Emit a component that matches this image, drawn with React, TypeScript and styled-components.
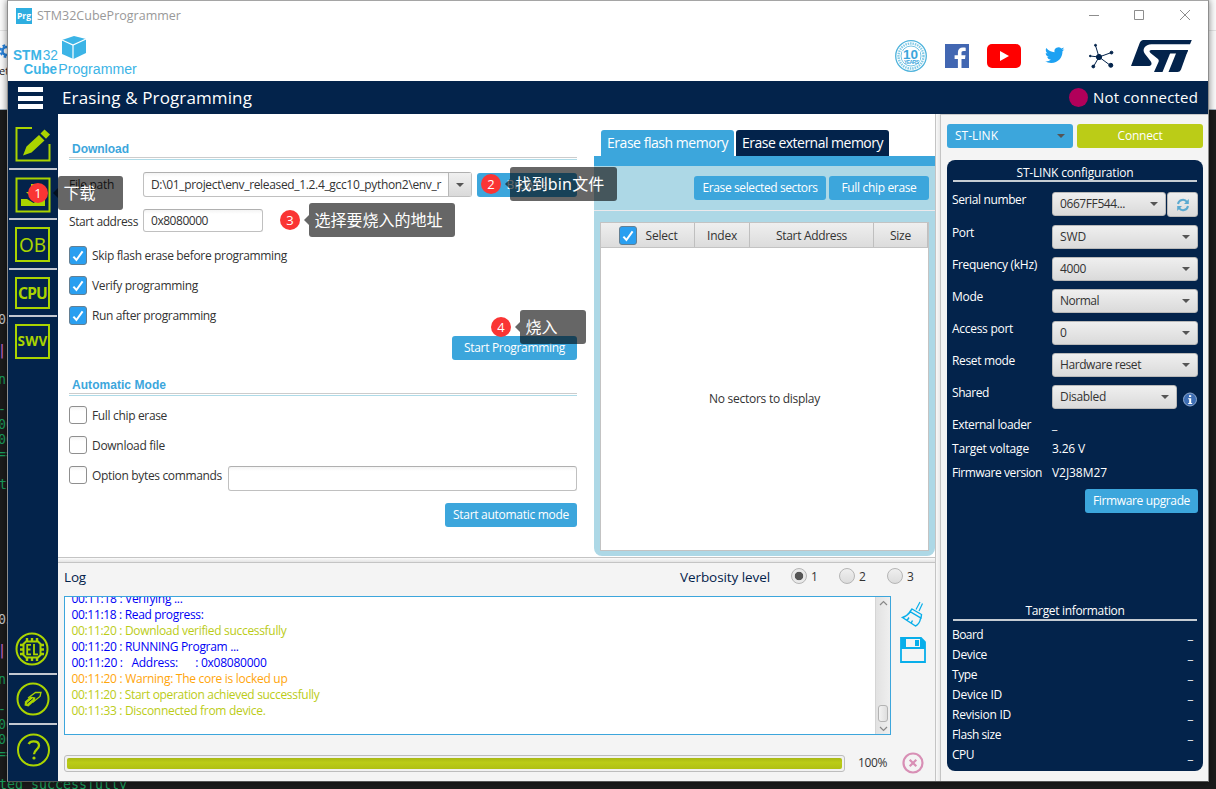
import React, { useLayoutEffect, useRef, useState } from "react";
import styled, { createGlobalStyle } from "styled-components";

const NAVY = "#03234b";
const BLUE = "#3ca6dc";
const LIME = "#aad400";
const UI = `"Open Sans", "Noto Sans", "Noto Sans CJK SC", sans-serif`;

const Global = createGlobalStyle`
  * { box-sizing: border-box; }
  body { margin: 0; overflow: hidden; font: 12px/16px ${UI}; color: #333; }
`;

const FitSpan = styled.span<{ $drop: number }>`
  display: inline-block;
  flex: none;
  padding-top: ${(p) => p.$drop}px;
  white-space: pre;
`;
function Fit({ w, drop = 0, children }: { w: number; drop?: number; children: string }) {
  const ref = useRef<HTMLSpanElement>(null);
  const [ls, setLs] = useState(0);
  useLayoutEffect(() => {
    const natural = ref.current!.getBoundingClientRect().width;
    setLs((w - natural) / children.length);
  }, [w, children]);
  return <FitSpan ref={ref} $drop={drop} style={{ letterSpacing: ls }}>{children}</FitSpan>;
}

/* ---------- desktop behind the window ---------- */
const Desktop = styled.div`
  position: relative;
  width: 1216px;
  height: 789px;
  overflow: hidden;
  background: linear-gradient(#fbfbfb 0 30px, #e4e4e4 30px 31px, #fafafa 31px 109px, #9fb0bd 109px 110px, #1b1b1b 110px);
`;
const Behind = styled.div<{ $x: number; $y: number; $c: string; $sans?: boolean }>`
  position: absolute;
  left: ${(p) => p.$x}px;
  top: ${(p) => p.$y}px;
  color: ${(p) => p.$c};
  font: ${(p) => (p.$sans ? `11px/14px ${UI}` : `13.3px/16px "DejaVu Sans Mono", monospace`)};
  white-space: pre;
`;
const BehindGear = styled.svg`
  position: absolute;
  left: 0;
  top: 43px;
`;
const Window = styled.div`
  position: relative;
  display: flex;
  flex-direction: column;
  width: 1202px;
  height: 782px;
  margin-left: 7px;
  border: 1px solid #8d8d8d;
  border-top-color: #a5a5a5;
  border-bottom-color: #555;
  background: #fff;
  box-shadow: 0 0 7px rgba(0, 0, 0, 0.5);
`;

/* ---------- header ---------- */
const TitleBar = styled.div`
  display: flex;
  align-items: center;
  height: 29px;
  padding: 0 16px 0 8px;
  font-size: 12.5px;
  color: #999;
`;
const AppBadge = styled.span`
  width: 16px;
  height: 16px;
  margin-right: 5px;
  background: #2eaee0;
  color: #fff;
  font: bold 8.5px/15px ${UI};
  text-align: center;
`;
const WinButtons = styled.svg`
  margin: -1px 0 0 auto;
`;
const BrandRow = styled.div`
  display: flex;
  height: 51px;
`;
const Socials = styled.svg`
  margin-left: auto;
`;
const PageBar = styled.div`
  display: flex;
  align-items: center;
  height: 33px;
  padding: 0 10px;
  background: ${NAVY};
  color: #fff;
  font-size: 17px;
`;
const Burger = styled.div`
  display: flex;
  flex-direction: column;
  justify-content: space-between;
  width: 25px;
  height: 22px;
  margin: 1px 19px 0 0;
  i { height: 5px; background: #fff; }
`;
const Status = styled.div`
  display: flex;
  align-items: center;
  gap: 5px;
  margin-left: auto;
  font-size: 15px;
  i { width: 19px; height: 19px; border-radius: 50%; background: #b1005a; }
  span { margin-top: -2px; }
`;

/* ---------- sidebar ---------- */
const Body = styled.div`
  display: flex;
  flex: 1;
  min-height: 0;
`;
const Sidebar = styled.div`
  display: flex;
  flex-direction: column;
  width: 50px;
  padding: 0 1px;
  background: ${NAVY};
`;
const SideItem = styled.div<{ $h: number; $last?: boolean; $pad?: string }>`
  display: flex;
  align-items: center;
  justify-content: center;
  height: ${(p) => p.$h}px;
  padding: ${(p) => p.$pad || "0 1px 0 0"};
  border-bottom: ${(p) => (p.$last ? "0" : "2px solid #c3c8d0")};
`;
const SideBox = styled.div<{ $h: number; $size: number; $bold?: boolean }>`
  display: flex;
  align-items: center;
  justify-content: center;
  width: 35px;
  height: ${(p) => p.$h}px;
  border: 2px solid ${LIME};
  color: ${LIME};
  font-family: "Noto Sans", sans-serif;
  font-size: ${(p) => p.$size}px;
  font-weight: ${(p) => (p.$bold ? 700 : 400)};
`;
const Spacer = styled.div`
  flex: 1;
`;

/* ---------- centre ---------- */
const Centre = styled.div`
  display: flex;
  flex-direction: column;
  width: 877px;
`;
const Work = styled.div`
  display: flex;
  height: 443px;
`;
const Form = styled.div`
  width: 519px;
  margin-right: 17px;
  padding: 27px 0 0 11px;
`;
const SectionTitle = styled.div`
  height: 19px;
  padding: 0 3px;
  border-bottom: 1px solid #aedbe8;
  background: linear-gradient(#ccc, #ccc) 0 16px / 100% 1px no-repeat;
  color: ${BLUE};
  font: bold 12px/15px "Liberation Sans", Arial, sans-serif;
`;
const Line = styled.div<{ $h: number; $mt?: number; $end?: boolean }>`
  display: flex;
  align-items: center;
  justify-content: ${(p) => (p.$end ? "flex-end" : "flex-start")};
  height: ${(p) => p.$h}px;
  margin-top: ${(p) => p.$mt || 0}px;
`;
const Label = styled.div<{ $w?: number; $drop?: number }>`
  width: ${(p) => (p.$w ? p.$w + "px" : "auto")};
  padding-top: ${(p) => p.$drop || 0}px;
  flex: none;
`;
const Field = styled.div<{ $w: number; $h: number }>`
  display: flex;
  align-items: center;
  width: ${(p) => p.$w}px;
  height: ${(p) => p.$h}px;
  padding-left: 7px;
  border: 1px solid #c0c0c0;
  border-top-color: #b0b0b0;
  border-radius: 3px;
  background: linear-gradient(#f4f4f4, #fff 4px);
`;
const FieldArrow = styled.div`
  display: flex;
  align-items: center;
  justify-content: center;
  width: 23px;
  height: 100%;
  margin-left: auto;
  border-left: 1px solid #b8b8b8;
  background: linear-gradient(#f0f0f0, #dadada);
`;
const Caret = styled.i`
  border: 4px solid transparent;
  border-top-color: #555;
  border-bottom: 0;
`;
const Button = styled.div<{ $w: number; $green?: boolean }>`
  display: flex;
  align-items: center;
  justify-content: center;
  flex: none;
  width: ${(p) => p.$w}px;
  height: 24px;
  border-radius: 3px;
  background: ${(p) => (p.$green ? "#bbcc17" : BLUE)};
  color: #fff;
`;
const Box = styled.span<{ $on?: boolean }>`
  display: flex;
  align-items: center;
  justify-content: center;
  flex: none;
  width: 18px;
  height: ${(p) => (p.$on ? 19 : 18)}px;
  border-radius: 3px;
  border: 1px solid ${(p) => (p.$on ? "#637f93" : "#8f8f8f")};
  background: ${(p) => (p.$on ? "#2a9ff0" : "linear-gradient(#f3f3f3, #fff 4px)")};
`;
const Check = ({ on }: { on?: boolean }) => (
  <Box $on={on}>
    {on && (
      <svg width="14" height="14" viewBox="0 0 14 14" fill="none" stroke="#fff" strokeWidth="2">
        <path d="M2.4 7.6 5.4 11 11.6 2.4" />
      </svg>
    )}
  </Box>
);
const CheckLine = styled.div`
  display: flex;
  align-items: center;
  gap: 5px;
  height: 30px;
  ${Box} { align-self: flex-start; margin-top: 5px; }
`;
const OptionField = styled.div`
  margin: 4px 0 0 -5px;
`;

const Erase = styled.div`
  width: 341px;
  padding-top: 16px;
`;
const Tabs = styled.div`
  display: flex;
  gap: 2px;
  padding-left: 7px;
`;
const Tab = styled.div<{ $w: number; $on?: boolean }>`
  display: flex;
  align-items: center;
  width: ${(p) => p.$w}px;
  height: 26px;
  padding-left: 6px;
  border-radius: 3px 3px 0 0;
  background: ${(p) => (p.$on ? BLUE : NAVY)};
  color: #fff;
  font-size: 14px;
`;
const EraseBody = styled.div`
  height: 400px;
  border-top: 10px solid ${BLUE};
  border-radius: 0 0 8px 8px;
  background: #add8e6;
`;
const EraseTools = styled.div`
  display: flex;
  justify-content: flex-end;
  gap: 3px;
  height: 45px;
  padding: 10px 6px 0 0;
  border-bottom: 1px solid #ece9ec;
`;
const Table = styled.div`
  display: flex;
  flex-direction: column;
  width: 329px;
  height: 329px;
  margin: 11px 0 0 6px;
  border: 1px solid #c3c3c3;
  background: #fff;
`;
const HeadRow = styled.div`
  display: grid;
  grid-template-columns: 94px 55px 124px 54px;
  height: 25px;
  border-bottom: 1px solid #c3c3c3;
  background: linear-gradient(#efefef, #dcdcdc);
`;
const HeadCell = styled.div`
  display: flex;
  align-items: center;
  justify-content: center;
  gap: 9px;
  padding-top: 1px;
  border-right: 1px solid #bfbfbf;
  &:first-child { padding-left: 1px; }
`;
const Empty = styled.div`
  display: flex;
  align-items: center;
  justify-content: center;
  flex: 1;
`;
const HSplit = styled.div`
  height: 6px;
  border: solid #c4c4c4;
  border-width: 1px 0;
  background: linear-gradient(#fbfbfb, #e4e4e4);
`;
const LogPane = styled.div`
  flex: 1;
  padding: 0 0 0 6px;
  background: #f4f4f4;
`;
const LogHead = styled.div`
  display: flex;
  align-items: center;
  height: 33px;
  padding-bottom: 5px;
  color: ${NAVY};
  font-size: 13.5px;
`;
const Verbosity = styled.div`
  display: flex;
  align-items: center;
  margin-left: auto;
  padding-right: 20px;
`;
const Radio = styled.span<{ $on?: boolean; $ml: number }>`
  width: 16px;
  height: 16px;
  margin: 0 4px 2px ${(p) => p.$ml}px;
  border: 1px solid #b5b5b5;
  border-radius: 50%;
  background: ${(p) =>
    p.$on ? "radial-gradient(circle, #555 0 3.8px, #e9e9e9 4.6px)" : "linear-gradient(#efefef, #dcdcdc)"};
`;
const RadioText = styled.span`
  width: 8px;
  color: #333;
  font-size: 12px;
`;
const LogRow = styled.div`
  display: flex;
  height: 139px;
`;
const LogBox = styled.div`
  display: flex;
  width: 827px;
  border: 1px solid ${BLUE};
  background: #fff;
  overflow: hidden;
`;
const LogLines = styled.div`
  flex: 1;
  margin-top: -6px;
  padding-left: 6.5px;
`;
const LogLine = styled.div<{ $c: string }>`
  height: 16px;
  color: ${(p) => p.$c};
`;
const ScrollBar = styled.div`
  display: flex;
  flex-direction: column;
  align-items: center;
  width: 15px;
  padding: 3px 0 2px;
  border-left: 1px solid #d5d5d5;
  background: linear-gradient(90deg, #e2e2e2, #efefef);
`;
const Thumb = styled.div`
  width: 10px;
  height: 17px;
  margin: auto 0 4px;
  border: 1px solid #b3b3b3;
  border-radius: 3px;
  background: linear-gradient(90deg, #f3f3f3, #dedede);
`;
const LogActions = styled.svg`
  margin-left: 8px;
`;
const ProgressRow = styled.div`
  display: flex;
  align-items: center;
  height: 24px;
  margin-top: 16px;
`;
const Track = styled.div`
  width: 781px;
  height: 17px;
  margin: 0 13px 0 0;
  padding: 2px;
  border: 1px solid #bdbdbd;
  border-radius: 3px;
  background: #f1f1f1;
`;
const Fill = styled.div`
  height: 11px;
  border-radius: 2px;
  background: linear-gradient(#a9b814, #bbcc17 40%, #b0c014);
`;
const CancelIcon = styled.svg`
  margin-left: 14px;
`;

/* ---------- right column ---------- */
const VSplit = styled.div`
  width: 6px;
  border: solid #c4c4c4;
  border-width: 0 1px;
  background: linear-gradient(90deg, #f8f8f8, #e8e8e8);
`;
const Right = styled.div`
  flex: 1;
  padding: 10px 4px 0 6px;
  border-top: 1px solid #c9c9c9;
  background: #f4f4f4;
`;
const ConnRow = styled.div`
  display: flex;
  gap: 4px;
  margin: -1px 0 12px;
`;
const LinkSelect = styled.div`
  display: flex;
  align-items: center;
  justify-content: space-between;
  width: 126px;
  height: 24px;
  padding: 0 8px;
  border-radius: 3px;
  background: ${BLUE};
  color: #fff;
`;
const Card = styled.div`
  display: flex;
  flex-direction: column;
  width: 256px;
  height: 611px;
  padding: 4px 5px 5px;
  border-radius: 8px;
  background: ${NAVY};
  color: #fff;
`;
const CardTitle = styled.div`
  height: 18px;
  margin: 0 1px;
  border-bottom: 2px solid #c5ccd3;
  text-align: center;
`;
const Param = styled.div<{ $h: number }>`
  display: flex;
  height: ${(p) => p.$h}px;
`;
const ParamName = styled.div`
  width: 100px;
`;
const Combo = styled.div<{ $w: number }>`
  display: flex;
  align-items: center;
  justify-content: space-between;
  width: ${(p) => p.$w}px;
  height: 24px;
  padding: 0 7px;
  border: 1px solid #b9b9b9;
  border-radius: 3px;
  background: linear-gradient(#efefef, #dadada);
  color: #333;
`;
const Params = styled.div`
  padding-top: 10px;
`;
const Refresh = styled.div`
  display: flex;
  align-items: center;
  justify-content: center;
  width: 31px;
  height: 25px;
  margin-left: 1px;
  border: 1px solid #b9b9b9;
  border-radius: 3px;
  background: linear-gradient(#efefef, #dadada);
`;
const InfoIcon = styled.svg`
  margin: 7px 0 0 6px;
`;
const Upgrade = styled.div`
  display: flex;
  justify-content: flex-end;
`;
const Target = styled.div`
  margin-top: auto;
`;
const TargetRow = styled.div`
  display: flex;
  justify-content: space-between;
  height: 20px;
  padding-right: 5px;
`;
const TargetRows = styled.div`
  padding-top: 6px;
  margin-bottom: -1px;
`;

/* ---------- annotation balloons ---------- */
const Marker = styled.div<{ $x: number; $y: number }>`
  position: absolute;
  left: ${(p) => p.$x}px;
  top: ${(p) => p.$y}px;
  width: 20px;
  height: 20px;
  border-radius: 50%;
  background: #fa3534;
  color: #fff;
  font: 13px/20px ${UI};
  text-align: center;
`;
const Balloon = styled.div<{ $x: number; $y: number; $w: number }>`
  position: absolute;
  left: ${(p) => p.$x}px;
  top: ${(p) => p.$y}px;
  width: ${(p) => p.$w}px;
  height: 34px;
  padding-left: 5.5px;
  border-radius: 3px;
  background: rgba(0, 0, 0, 0.6);
  color: #fff;
  font: 16px/34px "Noto Sans", "Noto Sans CJK SC", sans-serif;
  white-space: nowrap;
  &::before {
    content: "";
    position: absolute;
    left: -5px;
    top: 12px;
    border: 5px solid transparent;
    border-right-color: rgba(0, 0, 0, 0.6);
    border-left: 0;
  }
`;

const BrandLogo = () => (
  <svg width="140" height="51" viewBox="8 30 140 51" fill="#3cb4e6" fontFamily="Liberation Sans, Arial, sans-serif">
    <path d="M62 40 74 36 86 39 86 53 73.500 59 62 54Z" />
    <path d="M62 40 73 45 86 39M73 45V59" fill="none" stroke="#fff" strokeWidth="1.200" />
    <g transform="translate(13 60) scale(.9 1)" fontSize="14">
      <text fontWeight="700" textLength="32" lengthAdjust="spacingAndGlyphs">STM</text>
      <text x="33" textLength="17" lengthAdjust="spacingAndGlyphs">32</text>
    </g>
    <g transform="translate(23.500 73.500) scale(.8 1)" fontSize="15.500">
      <text fontWeight="700" textLength="42" lengthAdjust="spacingAndGlyphs">Cube</text>
      <text x="43.500" textLength="98" lengthAdjust="spacingAndGlyphs">Programmer</text>
    </g>
  </svg>
);

const SocialIcons = () => (
  <Socials width="320" height="51" viewBox="888 30 320 51">
    <g fill="none" stroke="#4fb3dc">
      <circle cx="911" cy="56" r="15.300" strokeWidth="1.300" />
      <circle cx="911" cy="56" r="12.500" strokeWidth="2.400" strokeDasharray="1.500 .9" opacity=".7" />
      <circle cx="911" cy="56" r="10" strokeWidth=".8" />
    </g>
    <path d="M902 51H920V60L918 63H904Z" fill="#fff" />
    <text x="903" y="58.800" fontSize="13.500" fontWeight="700" fill="#3ca6dc" fontFamily="Liberation Sans">10</text>
    <text x="904" y="63.800" fontSize="5" fontWeight="700" fill="#3ca6dc" fontFamily="Liberation Sans" textLength="15">YEARS</text>
    <rect x="945" y="44" width="24" height="24" fill="#4267b2" />
    <path d="M961.500 68V59H965l.5-3.700h-4V53c0-1.200.5-1.900 2-1.900h2.200v-3.300c-.6-.1-1.600-.2-2.800-.2-3 0-5 1.800-5 5v2.700h-3.300V59h3.300v9Z" fill="#fff" />
    <rect x="987" y="44" width="34" height="24" rx="5" fill="#f00" />
    <path d="M1000 51 1009 56 1000 61Z" fill="#fff" />
    <path transform="translate(1045 45.500) scale(.81)" fill="#1da1f2" d="M23.950 4.570a10 10 0 0 1-2.820.77 4.960 4.960 0 0 0 2.160-2.720c-.95.550-2 .95-3.130 1.180a4.920 4.920 0 0 0-8.380 4.480C7.690 8.090 4.070 6.130 1.640 3.160a4.820 4.820 0 0 0-.67 2.480c0 1.710.87 3.210 2.190 4.100a4.900 4.900 0 0 1-2.230-.62v.06a4.920 4.920 0 0 0 3.950 4.830 5 5 0 0 1-2.210.08 4.940 4.940 0 0 0 4.600 3.420A9.870 9.870 0 0 1 0 19.540a13.990 13.990 0 0 0 7.550 2.210c9.050 0 14-7.500 14-13.980 0-.21 0-.42-.02-.63A9.940 9.940 0 0 0 24 4.590Z" />
    <g stroke={NAVY} strokeWidth="1" fill={NAVY}>
      <path d="M1099 57 1095.500 45.500M1099 57 1111.500 52.500M1099 57 1090 56M1099 57 1093.500 66.500M1099 57 1110.500 65.500" />
      <circle cx="1099" cy="57" r="2.600" />
      <circle cx="1095.500" cy="45.300" r="1" />
      <circle cx="1111.500" cy="52.600" r="1.400" />
      <circle cx="1090.200" cy="56" r=".8" />
      <circle cx="1093.300" cy="66.500" r="1.400" />
      <circle cx="1110.800" cy="65.300" r="2" />
    </g>
    <g fill={NAVY}>
      <path d="M1143.500 40H1191.800L1190 44.300H1151.500C1145 44.300 1141.500 49.500 1145 54L1150.500 61C1152.500 63.800 1151.500 66 1148.500 66H1131L1139.500 43.500C1140.300 41.500 1141.500 40 1143.500 40Z" />
      <path d="M1150.500 53C1148.800 51 1149.500 50 1152 50H1171.500L1162.500 72H1154L1158.500 62C1159 60.800 1158.800 60 1158 59Z" />
      <path d="M1171 50H1188L1181 69.500C1180.300 71.200 1179 72 1177.500 72H1168.500L1177 51Z" />
      <path d="M1170 50H1188L1186.800 53.500H1169Z" />
    </g>
  </Socials>
);

const LOG: [string, string, number][] = [
  ["#0000f5", "00:11:18 : Verifying ...", 111],
  ["#0000f5", "00:11:18 : Read progress:", 132],
  ["#bbcc17", "00:11:20 : Download verified successfully", 215],
  ["#0000f5", "00:11:20 : RUNNING Program ... ", 170],
  ["#0000f5", "00:11:20 :   Address:      : 0x08080000", 195],
  ["#ffa50a", "00:11:20 : Warning: The core is locked up", 216],
  ["#bbcc17", "00:11:20 : Start operation achieved successfully", 248],
  ["#bbcc17", "00:11:33 : Disconnected from device.", 194],
];

const PARAMS: [string, number, string, number][] = [
  ["Port", 22, "SWD", 26],
  ["Frequency (kHz)", 85, "4000", 26],
  ["Mode", 31, "Normal", 39],
  ["Access port", 61, "0", 7],
  ["Reset mode", 63, "Hardware reset", 81],
];

const TARGET: [string, number][] = [
  ["Board", 31],
  ["Device", 35],
  ["Type", 25],
  ["Device ID", 50],
  ["Revision ID", 59],
  ["Flash size", 49],
  ["CPU", 22],
];

export default function App() {
  return (
    <Desktop>
      <Global />
      <BehindGear width="10" height="16" viewBox="0 43 10 16">
        <circle cx="6.500" cy="51" r="4" fill="none" stroke="#2681d9" strokeWidth="2.500" />
        <circle cx="6.500" cy="51" r="6" fill="none" stroke="#2681d9" strokeWidth="2" strokeDasharray="2.700 2" />
      </BehindGear>
      <Behind $x={-1} $y={64} $c="#222" $sans>et</Behind>
      {[312, 612].map((y) => (
        <React.Fragment key={y}>
          <Behind $x={-2} $y={y} $c="#c8c8c8">03</Behind>
          <Behind $x={-2} $y={y + 31} $c="#d26ad2">|</Behind>
          <Behind $x={-2} $y={y + 60} $c="#199e5c">n</Behind>
          <Behind $x={-2} $y={y + 90} $c="#199e5c">-</Behind>
          <Behind $x={-2} $y={y + 105} $c="#199e5c">00</Behind>
          <Behind $x={-2} $y={y + 120} $c="#199e5c">00</Behind>
          <Behind $x={-2} $y={y + 135} $c="#199e5c">==</Behind>
        </React.Fragment>
      ))}
      <Behind $x={-1} $y={477} $c="#199e5c">te</Behind>
      <Behind $x={-1} $y={777} $c="#199e5c">ted successfully</Behind>

      <Window>
        <TitleBar>
          <AppBadge>Prg</AppBadge>
          <Fit w={144} drop={1}>STM32CubeProgrammer</Fit>
          <WinButtons width="104" height="12" fill="none" stroke="#8d8d8d">
            <path d="M1 6.500H11M46.500 1.500H55.500V10.500H46.500ZM92 1 102 11M102 1 92 11" />
          </WinButtons>
        </TitleBar>
        <BrandRow>
          <BrandLogo />
          <SocialIcons />
        </BrandRow>
        <PageBar>
          <Burger><i /><i /><i /></Burger>
          <Fit w={190}>Erasing &amp; Programming</Fit>
          <Status><i /><Fit w={105}>Not connected</Fit></Status>
        </PageBar>

        <Body>
          <Sidebar>
            <SideItem $h={56} $pad="6px 1px 0 0">
              <svg width="36" height="36" viewBox="0 0 36 36" fill={LIME}>
                <path d="M17 2H1.500V34.500H34.500V18" fill="none" stroke={LIME} strokeWidth="2" />
                <path d="M8 29.500 11.500 20.500 24 9 29.500 14.500 16.500 26.500ZM25.500 7.500 29.500 3.500 35 8.500 31 12.800Z" />
              </svg>
            </SideItem>
            <SideItem $h={50} $pad="2px 1px 0 0">
              <svg width="36" height="36" viewBox="0 0 36 36" fill={LIME}>
                <rect x="1.500" y="1.500" width="33" height="33" fill="none" stroke={LIME} strokeWidth="2" />
                <path d="M16 7H21V15H27L18.500 22 11 15H16ZM6 22H12L18.500 26 25 22H30V29H6Z" />
              </svg>
            </SideItem>
            <SideItem $h={50} $pad="1px 1px 0 0"><SideBox $h={35} $size={19}><Fit w={27}>OB</Fit></SideBox></SideItem>
            <SideItem $h={47}><SideBox $h={32} $size={15.500} $bold><Fit w={29} drop={1}>CPU</Fit></SideBox></SideItem>
            <SideItem $h={50} $last $pad="0 1px 2px 0"><SideBox $h={35} $size={13.500} $bold><Fit w={30}>SWV</Fit></SideBox></SideItem>
            <Spacer />
            <SideItem $h={50} $pad="0 2px 0 0">
              <svg width="36" height="36" viewBox="0 0 36 36" fill="none" stroke={LIME} strokeWidth="2">
                <circle cx="18" cy="18" r="15.500" />
                <path d="M12 10.500H24L26.500 13V24L24 26.500H12L9.500 24V13Z" />
                <path d="M13 7V11M18 7V11M23 7V11M13 26V30M18 26V30M23 26V30M6 14H10M6 18.500H10M6 23H10M26 14H30M26 18.500H30M26 23H30" strokeWidth="2.400" />
                <path d="M17 13.800H13.200V23.400H17M13.200 18.500H16.500M20 13V23.400H24" strokeWidth="1.800" />
              </svg>
            </SideItem>
            <SideItem $h={50}>
              <svg width="36" height="36" viewBox="0 0 36 36" fill="none" stroke={LIME} strokeWidth="2">
                <circle cx="18" cy="18" r="15.500" />
                <path d="M13 17 20.500 11.500H26L25 15.500 17.500 21.500" strokeWidth="1.300" />
                <path d="M10 20.500 15.500 15.500 20.500 16.500 19.500 20 13.500 25.500 9.500 24.500Z" fill={LIME} stroke="none" />
                <path d="M12 22.500 18 17.500" stroke={NAVY} strokeWidth="1" />
              </svg>
            </SideItem>
            <SideItem $h={56} $last $pad="0 0 7px">
              <svg width="36" height="36" viewBox="0 0 36 36" fill="none" stroke={LIME} strokeWidth="2">
                <circle cx="18.500" cy="18" r="15.500" />
                <path d="M13.600 12C14.600 9.900 16.500 9.300 18.500 9.300 22 9.300 24 11.200 24 13.600 24 17.500 19 17.800 19 22.300" strokeWidth="2.300" />
                <circle cx="19" cy="26" r="1.600" fill={LIME} stroke="none" />
              </svg>
            </SideItem>
          </Sidebar>

          <Centre>
            <Work>
              <Form>
                <SectionTitle><Fit w={57} drop={1}>Download</Fit></SectionTitle>
                <Line $h={25} $mt={12}>
                  <Label $w={74}><Fit w={45} drop={1}>File path</Fit></Label>
                  <Field $w={329} $h={25}>
                    <Fit w={290} drop={1}>D:\01_project\env_released_1.2.4_gcc10_python2\env_r</Fit>
                    <FieldArrow><Caret /></FieldArrow>
                  </Field>
                  <Spacer />
                  <Button $w={100}><Fit w={41}>Browse</Fit></Button>
                </Line>
                <Line $h={23} $mt={12}>
                  <Label $w={74} $drop={3}><Fit w={69}>Start address</Fit></Label>
                  <Field $w={120} $h={23}><Fit w={57} drop={1}>0x8080000</Fit></Field>
                </Line>
                <Line $h={9} />
                <CheckLine><Check on /><Fit w={195}>Skip flash erase before programming</Fit></CheckLine>
                <CheckLine><Check on /><Fit w={106}>Verify programming</Fit></CheckLine>
                <CheckLine><Check on /><Fit w={124}>Run after programming</Fit></CheckLine>
                <Line $h={24} $mt={5} $end><Button $w={125}><Fit w={101}>Start Programming</Fit></Button></Line>
                <Line $h={17} />
                <SectionTitle><Fit w={94} drop={1}>Automatic Mode</Fit></SectionTitle>
                <Line $h={5} />
                <CheckLine><Check /><Fit w={75}>Full chip erase</Fit></CheckLine>
                <CheckLine><Check /><Fit w={73}>Download file</Fit></CheckLine>
                <CheckLine>
                  <Check /><Fit w={130}>Option bytes commands</Fit>
                  <Spacer />
                  <OptionField><Field $w={349} $h={25} /></OptionField>
                </CheckLine>
                <Line $h={24} $mt={12} $end><Button $w={132}><Fit w={116}>Start automatic mode</Fit></Button></Line>
              </Form>

              <Erase>
                <Tabs>
                  <Tab $w={133} $on><Fit w={121}>Erase flash memory</Fit></Tab>
                  <Tab $w={153}><Fit w={141}>Erase external memory</Fit></Tab>
                </Tabs>
                <EraseBody>
                  <EraseTools>
                    <Button $w={132}><Fit w={115}>Erase selected sectors</Fit></Button>
                    <Button $w={100}><Fit w={75}>Full chip erase</Fit></Button>
                  </EraseTools>
                  <Table>
                    <HeadRow>
                      <HeadCell><Check on /><Fit w={32} drop={1}>Select</Fit></HeadCell>
                      <HeadCell><Fit w={30} drop={1}>Index</Fit></HeadCell>
                      <HeadCell><Fit w={71} drop={1}>Start Address</Fit></HeadCell>
                      <HeadCell><Fit w={21} drop={1}>Size</Fit></HeadCell>
                    </HeadRow>
                    <Empty><Fit w={111}>No sectors to display</Fit></Empty>
                  </Table>
                </EraseBody>
              </Erase>
            </Work>
            <HSplit />
            <LogPane>
              <LogHead>
                <Fit w={22}>Log</Fit>
                <Verbosity>
                  <Fit w={90}>Verbosity level</Fit>
                  <Radio $on $ml={21} /><RadioText>1</RadioText>
                  <Radio $ml={20} /><RadioText>2</RadioText>
                  <Radio $ml={20} /><RadioText>3</RadioText>
                </Verbosity>
              </LogHead>
              <LogRow>
                <LogBox>
                  <LogLines>
                    {LOG.map(([c, t, w]) => (
                      <LogLine key={t} $c={c}><Fit w={w}>{t}</Fit></LogLine>
                    ))}
                  </LogLines>
                  <ScrollBar>
                    <svg width="9" height="6" fill="none" stroke="#888" strokeWidth="1.200"><path d="M1 5 4.500 1.500 8 5" /></svg>
                    <Thumb />
                    <svg width="9" height="6" fill="none" stroke="#888" strokeWidth="1.200"><path d="M1 1 4.500 4.500 8 1" /></svg>
                  </ScrollBar>
                </LogBox>
                <LogActions width="30" height="72" viewBox="899 596 30 72" fill="none" stroke="#08aeea">
                  <path d="M916 609.500 920 602M919 611 922.500 603.500" strokeWidth="1.200" />
                  <path d="M912 609 921.500 614.500 921 618 910 611.500ZM910.500 611.500C908 615 905.500 616.500 902.500 617.500L915.500 626C918.500 624.500 920 622 920.500 618.500M907 620.500 909 617.500M911 623.500 912.500 620.500" strokeWidth="1.400" />
                  <path d="M901 638H921L925 642V662H901Z" strokeWidth="1.800" />
                  <path d="M901 638H921L925 642V649H901Z" fill="#08aeea" stroke="none" />
                  <rect x="906" y="639" width="14" height="8" fill="#f4f4f4" stroke="none" />
                  <rect x="915" y="640" width="4" height="6" fill="#08aeea" stroke="none" />
                </LogActions>
              </LogRow>
              <ProgressRow>
                <Track><Fill /></Track>
                <Fit w={29}>100%</Fit>
                <CancelIcon width="24" height="24" fill="none" stroke="#d88fb5" strokeWidth="2.200">
                  <circle cx="12" cy="12" r="9.500" />
                  <path d="M8.700 8.700 15.300 15.300M15.300 8.700 8.700 15.300" />
                </CancelIcon>
              </ProgressRow>
            </LogPane>
          </Centre>

          <VSplit />

          <Right>
            <ConnRow>
              <LinkSelect><Fit w={43}>ST-LINK</Fit><Caret /></LinkSelect>
              <Button $w={126} $green><Fit w={45}>Connect</Fit></Button>
            </ConnRow>
            <Card>
              <CardTitle><Fit w={117} drop={1}>ST-LINK configuration</Fit></CardTitle>
              <Params>
                <Param $h={33}>
                  <ParamName><Fit w={74}>Serial number</Fit></ParamName>
                  <Combo $w={114}><Fit w={65}>0667FF544...</Fit><Caret /></Combo>
                  <Refresh>
                    <svg width="14" height="14" viewBox="0 0 14 14" fill="none" stroke="#5aa9d0" strokeWidth="2">
                      <path d="M2 6A5 5 0 0 1 11 4M12 8A5 5 0 0 1 3 10" />
                      <path d="M12.800 1V6H8ZM1.200 13V8H6Z" fill="#5aa9d0" stroke="none" />
                    </svg>
                  </Refresh>
                </Param>
                {PARAMS.map(([n, nw, v, vw]) => (
                  <Param key={n} $h={32}>
                    <ParamName><Fit w={nw}>{n}</Fit></ParamName>
                    <Combo $w={146}><Fit w={vw}>{v}</Fit><Caret /></Combo>
                  </Param>
                ))}
                <Param $h={32}>
                  <ParamName><Fit w={37}>Shared</Fit></ParamName>
                  <Combo $w={125}><Fit w={46}>Disabled</Fit><Caret /></Combo>
                  <InfoIcon width="14" height="15" viewBox="0 0 14 15">
                    <circle cx="7" cy="7.500" r="6.500" fill="#3d6db3" stroke="#8fa9cf" />
                    <path d="M6 3.200H8.200V5H6ZM5.200 6.200H8.200V11H9.200V12H5.200V11H6.200V7.200H5.200Z" fill="#fff" />
                  </InfoIcon>
                </Param>
                <Param $h={24}><ParamName><Fit w={79}>External loader</Fit></ParamName>_</Param>
                <Param $h={24}><ParamName><Fit w={77}>Target voltage</Fit></ParamName><Fit w={33}>3.26 V</Fit></Param>
                <Param $h={24}><ParamName><Fit w={90}>Firmware version</Fit></ParamName><Fit w={55}>V2J38M27</Fit></Param>
              </Params>
              <Upgrade><Button $w={113}><Fit w={97}>Firmware upgrade</Fit></Button></Upgrade>
              <Target>
                <CardTitle><Fit w={99}>Target information</Fit></CardTitle>
                <TargetRows>
                  {TARGET.map(([t, w]) => (
                    <TargetRow key={t}><Fit w={w}>{t}</Fit><span>_</span></TargetRow>
                  ))}
                </TargetRows>
              </Target>
            </Card>
          </Right>
        </Body>
      </Window>

      <Marker $x={28} $y={183}>1</Marker>
      <Balloon $x={58} $y={176} $w={65}>下载</Balloon>
      <Marker $x={481} $y={174}>2</Marker>
      <Balloon $x={510} $y={167} $w={107}><Fit w={89}>找到bin文件</Fit></Balloon>
      <Marker $x={280} $y={210}>3</Marker>
      <Balloon $x={309} $y={203} $w={146}>选择要烧入的地址</Balloon>
      <Marker $x={491} $y={317}>4</Marker>
      <Balloon $x={520} $y={310} $w={66}>烧入</Balloon>
    </Desktop>
  );
}
